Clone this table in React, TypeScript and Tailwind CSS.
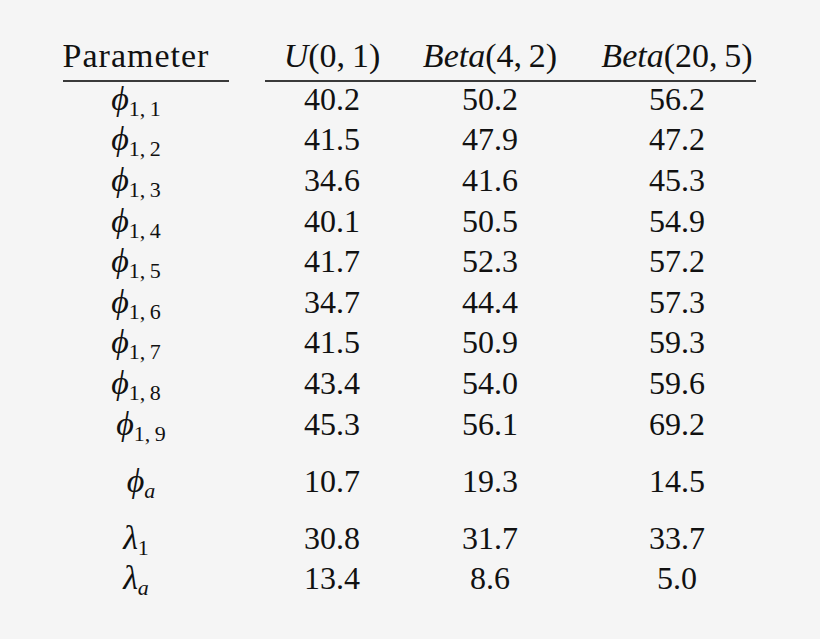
import React from "react";

const serif = { fontFamily: '"Liberation Serif", "DejaVu Serif", "Times New Roman", serif' };

type Row = { sym: string; sub: string; subItalic?: boolean; shift?: boolean; vals: string[]; mt?: string };

const rows: Row[] = [
  { sym: "ϕ", sub: "1,\u20091", vals: ["40.2", "50.2", "56.2"] },
  { sym: "ϕ", sub: "1,\u20092", vals: ["41.5", "47.9", "47.2"] },
  { sym: "ϕ", sub: "1,\u20093", vals: ["34.6", "41.6", "45.3"] },
  { sym: "ϕ", sub: "1,\u20094", vals: ["40.1", "50.5", "54.9"] },
  { sym: "ϕ", sub: "1,\u20095", vals: ["41.7", "52.3", "57.2"] },
  { sym: "ϕ", sub: "1,\u20096", vals: ["34.7", "44.4", "57.3"] },
  { sym: "ϕ", sub: "1,\u20097", vals: ["41.5", "50.9", "59.3"] },
  { sym: "ϕ", sub: "1,\u20098", vals: ["43.4", "54.0", "59.6"] },
  { sym: "ϕ", sub: "1,\u20099", shift: true, vals: ["45.3", "56.1", "69.2"] },
  { sym: "ϕ", sub: "a", subItalic: true, shift: true, vals: ["10.7", "19.3", "14.5"], mt: "mt-[17px]" },
  { sym: "λ", sub: "1", vals: ["30.8", "31.7", "33.7"], mt: "mt-[16px]" },
  { sym: "λ", sub: "a", subItalic: true, vals: ["13.4", "8.6", "5.0"] },
];

function Cell({ children, className = "" }: { children: React.ReactNode; className?: string }) {
  return (
    <div className={`flex items-center justify-center whitespace-nowrap ${className}`}>
      <span>{children}</span>
    </div>
  );
}

export default function App() {
  return (
    <div
      className="w-[820px] h-[639px] bg-[#f5f5f5] text-[#111111] overflow-hidden pt-[36px]"
      style={serif}
    >
      {/* header */}
      <div className="ml-[40px] grid grid-cols-[192px_200px_116px_258px] h-[40px] text-[34px] leading-none">
        <Cell className="tracking-[1px]">Parameter</Cell>
        <Cell>
          <span className="italic">U</span>(0,{"\u2009"}1)
        </Cell>
        <Cell>
          <span className="italic">Beta</span>(4,{"\u2009"}2)
        </Cell>
        <Cell>
          <span className="italic">Beta</span>(20,{"\u2009"}5)
        </Cell>
      </div>

      {/* rules */}
      <div className="mt-[4px] flex h-[2px]">
        <div className="ml-[63px] w-[166px] h-[2px] bg-[#3a3a3a]" />
        <div className="ml-[36px] w-[491px] h-[2px] bg-[#3a3a3a]" />
      </div>

      {/* body */}
      <div className="-mt-[3.5px] text-[32px] leading-none">
        {rows.map((r, i) => (
          <div
            key={i}
            className={`ml-[40px] grid grid-cols-[192px_200px_116px_258px] h-[40.6px] ${r.mt ?? ""}`}
          >
            <Cell className={r.shift ? "pl-[10px]" : ""}>
              <span className="text-[34px] italic">{r.sym}</span>
              <span
                className={`text-[22px] leading-[0] align-[-6px] ${r.subItalic ? "italic" : ""}`}
              >
                {r.sub}
              </span>
            </Cell>
            {r.vals.map((v, j) => (
              <Cell key={j}>{v}</Cell>
            ))}
          </div>
        ))}
      </div>
    </div>
  );
}
